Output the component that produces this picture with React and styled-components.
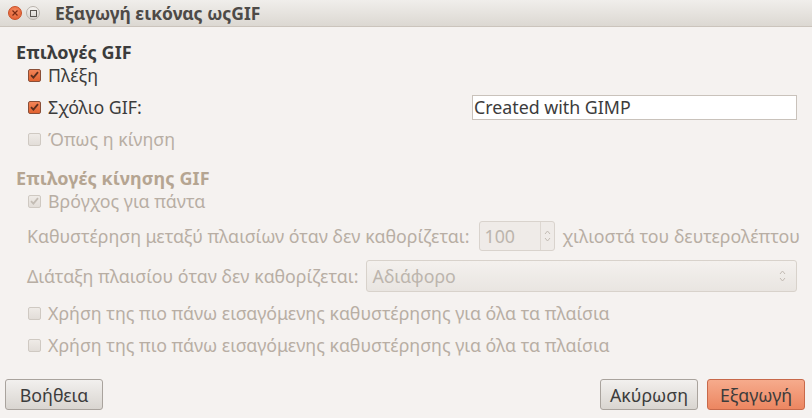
import React from 'react'
import styled, { createGlobalStyle, css } from 'styled-components'

const GlobalStyle = createGlobalStyle`
  html, body {
    margin: 0;
    padding: 0;
    background: #f5f2f0;
  }
  body {
    font-family: "Noto Sans", "DejaVu Sans", sans-serif;
  }
`

const Window = styled.div`
  width: 812px;
  height: 418px;
  display: flex;
  flex-direction: column;
  background: #f5f2f0;
  color: #3c3c3c;
  font-size: 17.8px;
  white-space: nowrap;
  overflow: hidden;
`

const TitleBar = styled.div`
  height: 26px;
  display: flex;
  align-items: center;
  padding-left: 8px;
  background: linear-gradient(#f0eeeb, #dcd8d2);
  border-bottom: 1px solid #cbc4bc;
`

const WinButton = styled.div`
  width: 14px;
  height: 14px;
  border-radius: 50%;
  margin-right: 4px;
  display: flex;
  align-items: center;
  justify-content: center;
  box-sizing: border-box;
  ${props => props.close ? css`
    background: radial-gradient(circle at 50% 35%, #f58a60, #e05a2c);
    border: 1px solid #c94e25;
  ` : css`
    background: linear-gradient(#f6f4f1, #d6d2cd);
    border: 1px solid #b9b3ac;
  `}
`

const Title = styled.div`
  margin-left: 11px;
  font-weight: 700;
  font-size: 17.5px;
  color: #4d4a47;
`

const Body = styled.div`
  flex: 1;
  display: flex;
  flex-direction: column;
  padding: 15px 15px 0 16px;
`

const Heading = styled.div`
  height: 20px;
  line-height: 20px;
  font-weight: 700;
  font-size: 18px;
  letter-spacing: 0.1px;
  color: ${props => props.disabled ? '#b5a592' : '#3c3c3c'};
  margin-top: ${props => props.top || 0}px;
`

const Row = styled.div`
  display: flex;
  align-items: center;
  height: ${props => props.h || 22}px;
  margin-top: ${props => props.top || 0}px;
  padding-left: ${props => props.indent || 12}px;
  color: ${props => props.disabled ? '#b8aea4' : '#3c3c3c'};
`

const CheckLabel = styled.label`
  display: flex;
  align-items: center;
  gap: 7px;
`

const Box = styled.span`
  width: 13px;
  height: 13px;
  box-sizing: border-box;
  border-radius: 2px;
  display: inline-flex;
  align-items: center;
  justify-content: center;
  ${props => props.disabled ? css`
    background: linear-gradient(#efebe7, #e2ddd8);
    border: 1px solid #cfc9c2;
  ` : css`
    background: linear-gradient(#f28457, #e1622f);
    border: 1px solid #8a4f38;
  `}
`

const Spacer = styled.div`
  flex: 1;
`

const Entry = styled.div`
  width: 325px;
  height: 25px;
  box-sizing: border-box;
  background: #fff;
  border: 1px solid #c9c2bb;
  padding-left: 1px;
  display: flex;
  align-items: center;
  color: #3c3c3c;
`

const Spin = styled.div`
  width: 76px;
  height: 30px;
  box-sizing: border-box;
  margin: 0 8px 0 9px;
  border: 1px solid #d9d3cd;
  border-radius: 3px;
  background: #efebe8;
  display: flex;
  align-items: center;
  flex-shrink: 0;
`

const SpinValue = styled.div`
  flex: 1;
  padding-left: 5px;
  color: #bcb5ad;
`

const SpinArrows = styled.div`
  width: 13px;
  height: 100%;
  border-left: 1px solid #ddd7d1;
  display: flex;
  align-items: center;
  justify-content: center;
`

const Combo = styled.div`
  flex: 1;
  height: 32px;
  box-sizing: border-box;
  margin-left: 7px;
  border: 1px solid #d8d2cb;
  border-radius: 3px;
  background: linear-gradient(#f4f1ee, #e9e5e1);
  display: flex;
  align-items: center;
  justify-content: space-between;
  padding: 0 10px 0 6px;
  color: #bcb5ad;
`

const Footer = styled.div`
  display: flex;
  align-items: center;
  padding: 0 7px 8px 5px;
  gap: 9px;
`

const Button = styled.button`
  width: 98px;
  height: 31px;
  box-sizing: border-box;
  border-radius: 3px;
  font-family: inherit;
  font-size: 17.8px;
  padding: 0;
  ${props => props.primary ? css`
    background: linear-gradient(#f6ab8c, #ec8661);
    border: 1px solid #c8694a;
    color: #3c3c3c;
  ` : css`
    background: linear-gradient(#f2f0ee, #d9d5d0);
    border: 1px solid #a9a39d;
    color: #3c3c3c;
  `}
`

const Tick = ({ color }) => (
  <svg width="9" height="8" viewBox="0 0 9 8">
    <path d="M1 4.2 L3.4 6.6 L8 1.2" fill="none" stroke={color} strokeWidth="1.8" />
  </svg>
)

const Check = ({ checked, disabled, children }) => (
  <CheckLabel>
    <Box disabled={disabled}>
      {checked && <Tick color={disabled ? '#c3bcb4' : '#5a2e1e'} />}
    </Box>
    {children}
  </CheckLabel>
)

const UpDown = ({ color }) => (
  <svg width="7" height="16" viewBox="0 0 7 16">
    <path d="M1 6 L3.5 3 L6 6" fill="none" stroke={color} strokeWidth="1" />
    <path d="M1 10 L3.5 13 L6 10" fill="none" stroke={color} strokeWidth="1" />
  </svg>
)

export default function App() {
  return (
    <>
      <GlobalStyle />
      <Window>
        <TitleBar>
          <WinButton close>
            <svg width="6" height="6" viewBox="0 0 6 6">
              <path d="M0.5 0.5 L5.5 5.5 M5.5 0.5 L0.5 5.5" stroke="#7a2a12" strokeWidth="1.2" />
            </svg>
          </WinButton>
          <WinButton>
            <svg width="7" height="7" viewBox="0 0 7 7">
              <rect x="0.5" y="0.5" width="6" height="6" fill="none" stroke="#5a5550" strokeWidth="1" />
            </svg>
          </WinButton>
          <Title>Εξαγωγή εικόνας ωςGIF</Title>
        </TitleBar>
        <Body>
          <Heading>Επιλογές GIF</Heading>
          <Row top={2}>
            <Check checked>Πλέξη</Check>
          </Row>
          <Row h={26} top={8}>
            <Check checked>Σχόλιο GIF:</Check>
            <Spacer />
            <Entry>Created with GIMP</Entry>
          </Row>
          <Row top={8} disabled>
            <Check disabled>Όπως η κίνηση</Check>
          </Row>
          <Heading disabled top={18}>Επιλογές κίνησης GIF</Heading>
          <Row top={2} disabled>
            <Check checked disabled>Βρόγχος για πάντα</Check>
          </Row>
          <Row h={30} top={9} indent={11} disabled>
            Καθυστέρηση μεταξύ πλαισίων όταν δεν καθορίζεται:
            <Spin>
              <SpinValue>100</SpinValue>
              <SpinArrows>
                <UpDown color="#c2bbb3" />
              </SpinArrows>
            </Spin>
            χιλιοστά του δευτερολέπτου
          </Row>
          <Row h={33} top={8} indent={11} disabled>
            Διάταξη πλαισίου όταν δεν καθορίζεται:
            <Combo>
              Αδιάφορο
              <UpDown color="#c2bbb3" />
            </Combo>
          </Row>
          <Row top={10} disabled>
            <Check disabled>Χρήση της πιο πάνω εισαγόμενης καθυστέρησης για όλα τα πλαίσια</Check>
          </Row>
          <Row top={10} disabled>
            <Check disabled>Χρήση της πιο πάνω εισαγόμενης καθυστέρησης για όλα τα πλαίσια</Check>
          </Row>
        </Body>
        <Footer>
          <Button>Βοήθεια</Button>
          <Spacer />
          <Button>Ακύρωση</Button>
          <Button primary>Εξαγωγή</Button>
        </Footer>
      </Window>
    </>
  )
}
